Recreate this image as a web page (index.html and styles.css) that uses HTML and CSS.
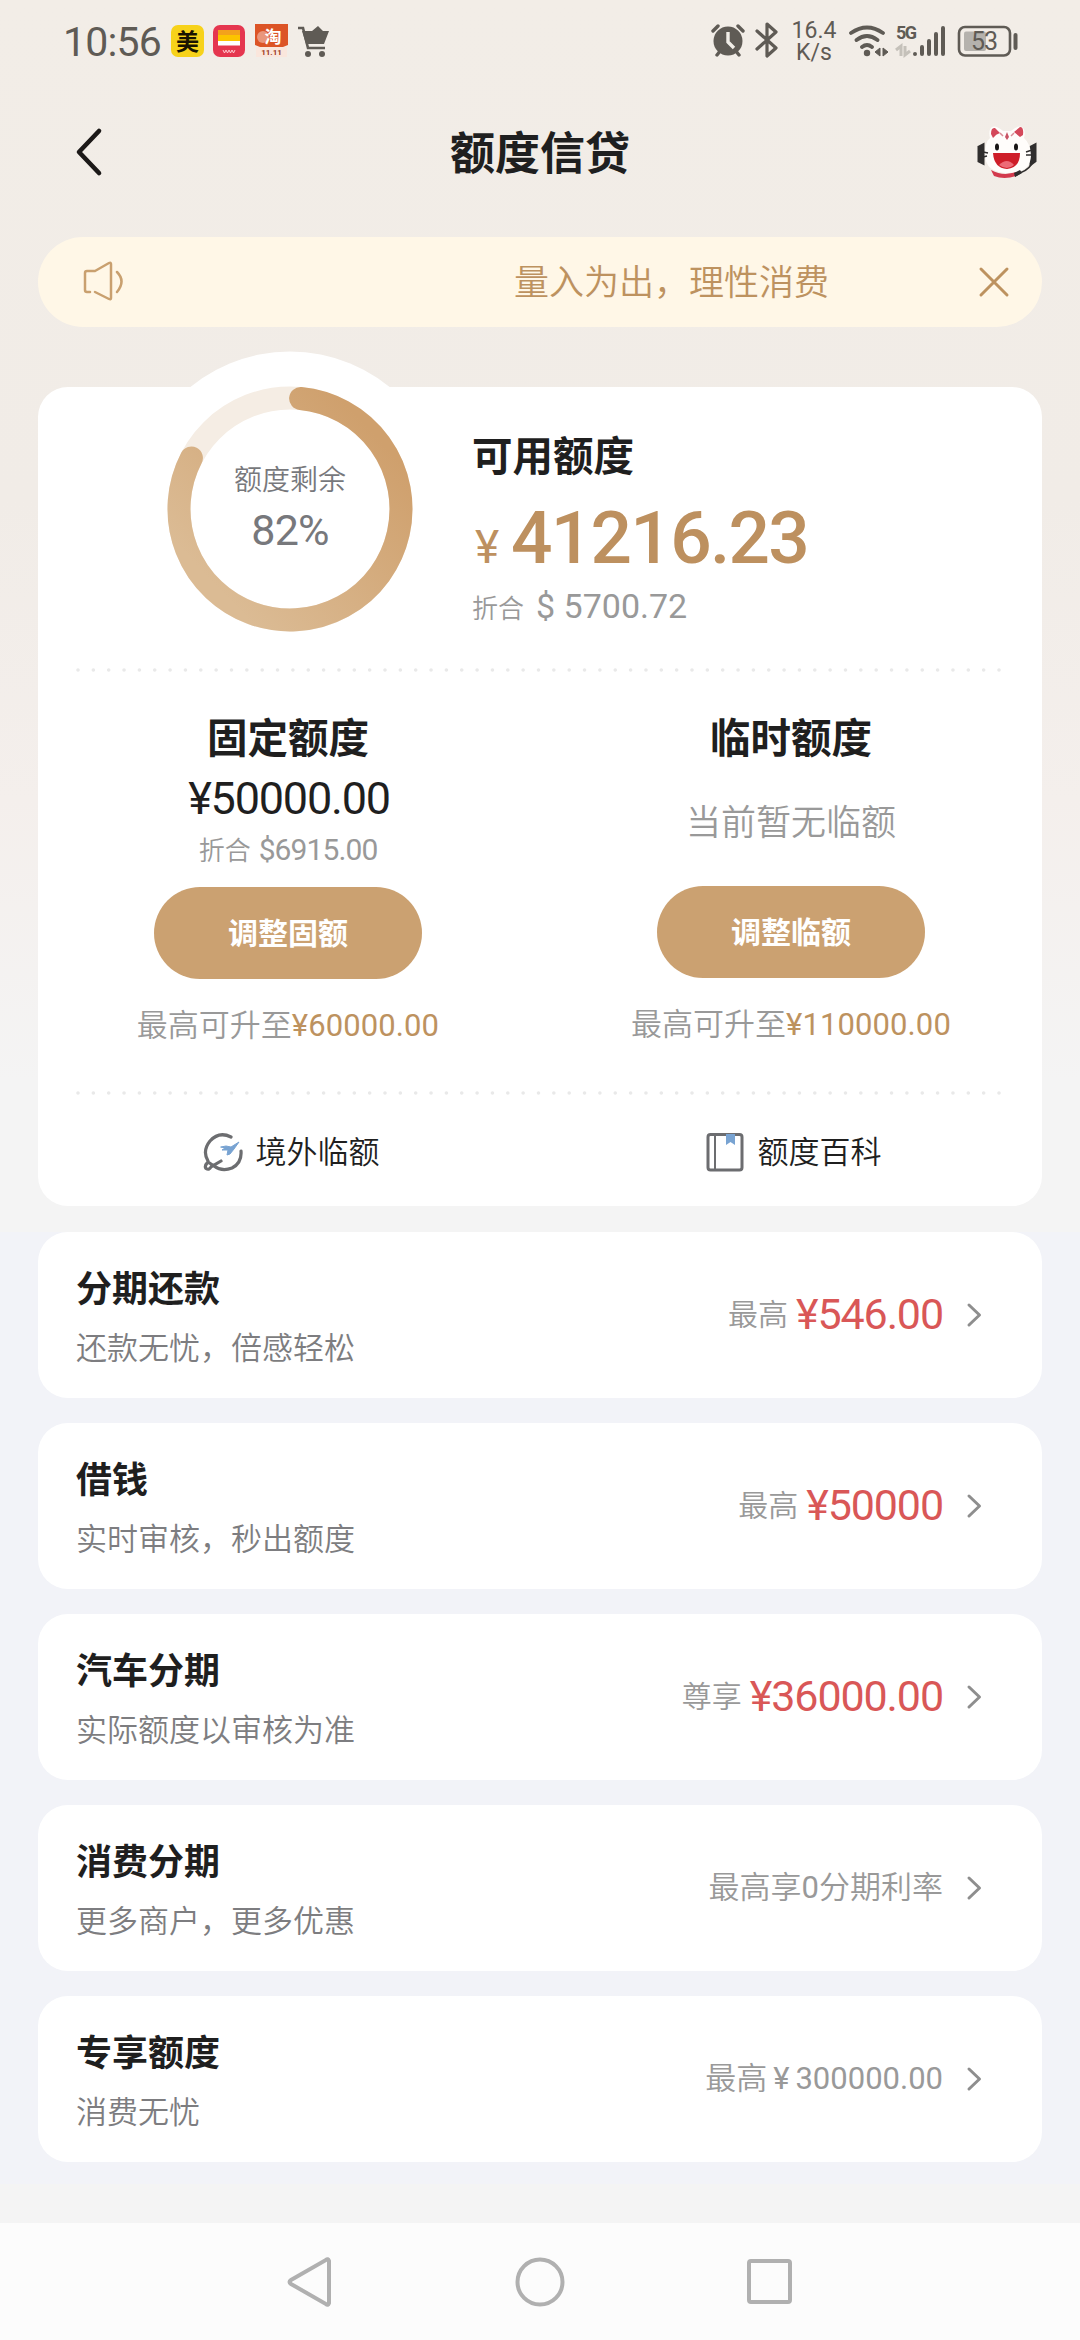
FILE: index.html
```html
<!DOCTYPE html>
<html lang="zh-CN">
<head>
<meta charset="utf-8">
<title>额度信贷</title>
<link rel="stylesheet" href="styles.css">
</head>
<body>
<div class="status">
  <span class="clock">10:56</span>
  <svg class="apps" width="160" height="36" viewBox="0 0 160 36">
    <rect x="1" y="2" width="33" height="32" rx="7" fill="#f7d21a"/>
    <text x="17.500" y="27" class="app-mei">美</text>
    <rect x="43" y="2" width="32" height="32" rx="7" fill="#e5364f"/>
    <rect x="48" y="7" width="22" height="6" fill="#f3a21c"/>
    <rect x="48" y="12" width="22" height="6" fill="#fcc400"/>
    <rect x="48" y="18" width="22" height="4.500" fill="#fff"/>
    <path d="M53 27l1.500 3 1.500-3 1.500 3 1.500-3 1.500 3 1.500-3 1.500 3 1.500-3" fill="none" stroke="#ffc9cf" stroke-width="1"/>
    <path d="M85 1h33v21l-5 2H90l-5-2z" fill="#dc5426"/>
    <path d="M86 24h31v10H86z" fill="#fae6dc"/>
    <circle cx="93" cy="14" r="6" fill="#e9967c"/>
    <text x="103" y="20" class="app-tao">淘</text>
    <text x="101.500" y="32" class="app-date">11.11</text>
    <path d="M128 5h5l5 20h17" fill="none" stroke="#5f5b55" stroke-width="2.600"/>
    <path d="M132 8h10l6-5 5 5h6l-5 13h-18z" fill="#5f5b55"/>
    <circle cx="138" cy="31" r="3" fill="#5f5b55"/><circle cx="152" cy="31" r="3" fill="#5f5b55"/>
  </svg>
  <svg class="sys" width="68" height="36" viewBox="0 0 68 36">
    <circle cx="17" cy="19" r="14.500" fill="#5f5b55"/>
    <path d="M2 9l5-5M32 9l-5-5M6 33l4-5M28 33l-4-5" stroke="#5f5b55" stroke-width="3.400" stroke-linecap="round"/>
    <path d="M17 10v10l6 6" fill="none" stroke="#f1ede7" stroke-width="3.400"/>
    <path d="M46 9l19 17-9 8V2l9 8-19 17" fill="none" stroke="#5f5b55" stroke-width="3.200" stroke-linejoin="round" stroke-linecap="round"/>
  </svg>
  <span class="speed"><span>16.4</span><span>K/s</span></span>
  <svg class="net" width="172" height="36" viewBox="0 0 172 36">
    <g fill="none" stroke="#5f5b55" stroke-width="3.800" stroke-linecap="round">
      <path d="M3 10Q19 -1 35 10M8.500 17Q19 9 29.500 17M14 24Q19 20 24 24"/>
    </g>
    <circle cx="19" cy="30" r="3.200" fill="#5f5b55"/>
    <path d="M27 29l5-4v8zM40 29l-5-4v8z" fill="#5f5b55" stroke="#5f5b55" stroke-width="1"/>
    <text x="48" y="16" class="fiveg">5G</text>
    <path d="M48 27l5-4v10M62 28l-5 4V23" fill="none" stroke="#c5c1ba" stroke-width="3"/>
    <g stroke="#5f5b55" stroke-width="4" stroke-linecap="round">
      <path d="M67 31v0.100M74 24v7M81 18v13M88 11v20M95 5v26"/>
    </g>
    <rect x="111" y="4" width="51" height="28.500" rx="6" fill="none" stroke="#5f5b55" stroke-width="2.600"/>
    <rect x="116" y="8.500" width="22" height="19.500" rx="2" fill="#b5b2ad"/>
    <path d="M167.500 12v13" stroke="#5f5b55" stroke-width="4" stroke-linecap="round"/>
    <text x="136" y="27" class="batt">53</text>
  </svg>
</div>

<header class="header">
  <svg class="back" width="34" height="54" viewBox="0 0 34 54"><path d="M28 6L8 27l20 21" fill="none" stroke="#1c1918" stroke-width="4.600" stroke-linecap="round" stroke-linejoin="round"/></svg>
  <h1>额度信贷</h1>
  <svg class="mascot" width="60" height="56" viewBox="0 0 60 56">
    <path d="M2 23l4-2v18l-4-2zM54 23l4-2v16l-4 3z" fill="#302e2e" stroke="#302e2e" stroke-width="3"/>
    <path d="M14 46q15 8 28 0l-3 6q-12 4-22 0z" fill="#d33a4d"/>
    <path d="M8 30Q8 18 13 14Q11 6 15 3Q19 1 26 7h8Q42 0 46 4Q49 7 47 14Q54 20 54 32Q53 49 31 49Q8 49 8 30z" fill="#fffdfb"/>
    <path d="M14 10q0-7 4-6l5 5q-4 1-7 5zM37 8l6-5q4 0 3 8l-3 2z" fill="#d4485a"/>
    <path d="M30 8l2 5-2 3-2-3z" fill="#c95465"/>
    <path d="M23 9l3 3M37 9l-3 3" stroke="#d98c96" stroke-width="1.500"/>
    <ellipse cx="20" cy="23" rx="2" ry="3.500" fill="#181515"/><ellipse cx="39" cy="23" rx="2" ry="3.500" fill="#181515"/>
    <path d="M16 29h27q0 15-13 16Q17 44 16 29z" fill="#ce1d28"/>
    <path d="M22 41q8-8 15 0-7 6-15 0z" fill="#ed6b76"/>
    <path d="M6 28l5 1M6 33l4-1M49 28l6-2M49 31h6M56 36q-2 9-13 13l-5 3" fill="none" stroke="#302e2e" stroke-width="1.500"/>
    <path d="M37 49l6-3 2 3-7 4z" fill="#302e2e"/>
  </svg>
</header>

<section class="notice">
  <svg width="44" height="42" viewBox="0 0 44 42" fill="none" stroke="#c9a06f" stroke-width="2.500" stroke-linecap="round" stroke-linejoin="round">
    <path d="M7 31H4Q2 31 2 29V12Q2 10 4 10h8L26 2q2-1 2 1v34q0 2-2 1L12 31M34 11q9 9 0 20"/>
  </svg>
  <span class="notice-text">量入为出，理性消费</span>
  <svg width="32" height="32" viewBox="0 0 32 32"><path d="M3 3l26 26M29 3L3 29" stroke="#bd925f" stroke-width="3" stroke-linecap="round"/></svg>
</section>

<section class="card">
  <div class="summary">
    <div class="ring">
      <svg width="316" height="316" viewBox="-158 -158 316 316">
        <defs><linearGradient id="gold" gradientUnits="userSpaceOnUse" x1="70" y1="-90" x2="-90" y2="60"><stop offset="0" stop-color="#cfa06d"/><stop offset="1" stop-color="#dbbb94"/></linearGradient></defs>
        <circle r="157.500" fill="#fff"/>
        <circle r="111" fill="none" stroke="#f5ede4" stroke-width="23"/>
        <path d="M10.600-110.500A111 111 0 1 1-98.600-51" fill="none" stroke="url(#gold)" stroke-width="23" stroke-linecap="round"/>
      </svg>
      <div class="ring-text"><span class="ring-label">额度剩余</span><span class="ring-value">82%</span></div>
    </div>
    <div class="available">
      <h2>可用额度</h2>
      <p class="total"><span class="yen">¥</span><span class="num">41216.23</span></p>
      <p class="usd">折合<span class="num">$ 5700.72</span></p>
    </div>
  </div>
  <svg class="dots" width="927" height="4"><path d="M2 2H927" stroke="#e9e9e9" stroke-width="3.600" stroke-linecap="round" stroke-dasharray="0 15.350"/></svg>
  <div class="limits">
    <div class="limit">
      <h2>固定额度</h2>
      <p class="amount">¥50000.00</p>
      <p class="approx">折合<span class="num">$6915.00</span></p>
      <button class="btn">调整固额</button>
      <p class="max">最高可升至<span class="num">¥60000.00</span></p>
    </div>
    <div class="limit">
      <h2>临时额度</h2>
      <p class="none">当前暂无临额</p>
      <button class="btn">调整临额</button>
      <p class="max">最高可升至<span class="num">¥110000.00</span></p>
    </div>
  </div>
  <svg class="dots" width="927" height="4"><path d="M2 2H927" stroke="#e9e9e9" stroke-width="3.600" stroke-linecap="round" stroke-dasharray="0 15.350"/></svg>
  <div class="links">
    <a class="link">
      <svg width="40" height="40" viewBox="0 0 40 40" fill="none" stroke="#6c6d70" stroke-width="3.200" stroke-linecap="round">
        <path d="M28 5Q16-1 7 9Q-1 19 5 29M38 19Q39 31 29 36Q19 40 11 34M5 30q-4 4-2 6.500 3 2 5-1.500L18 29M5 30l6 4"/>
        <path d="M18 15l5-1 5 1 8-5-5 7-4 5-3 1 1-5-6 0 3-2z" fill="#78a3d2" stroke="#78a3d2" stroke-width="1"/>
      </svg>
      <span>境外临额</span>
    </a>
    <a class="link">
      <svg width="40" height="40" viewBox="0 0 40 40">
        <rect x="3" y="2.500" width="34" height="35.500" rx="2.500" fill="none" stroke="#6c6d70" stroke-width="3"/>
        <path d="M10 2v36" stroke="#6c6d70" stroke-width="2"/>
        <path d="M21 2h9v11l-4.500-3-4.500 3z" fill="#78a3d2"/>
      </svg>
      <span>额度百科</span>
    </a>
  </div>
</section>

<main class="list">
  <article class="item">
    <div class="item-main"><h3>分期还款</h3><p>还款无忧，倍感轻松</p></div>
    <div class="item-side"><span class="tag">最高</span><span class="price">¥546.00</span></div>
    <svg class="chev" width="17" height="26" viewBox="0 0 17 26"><path d="M3 3l10.500 10L3 23"/></svg>
  </article>
  <article class="item">
    <div class="item-main"><h3>借钱</h3><p>实时审核，秒出额度</p></div>
    <div class="item-side"><span class="tag">最高</span><span class="price">¥50000</span></div>
    <svg class="chev" width="17" height="26" viewBox="0 0 17 26"><path d="M3 3l10.500 10L3 23"/></svg>
  </article>
  <article class="item">
    <div class="item-main"><h3>汽车分期</h3><p>实际额度以审核为准</p></div>
    <div class="item-side"><span class="tag">尊享</span><span class="price">¥36000.00</span></div>
    <svg class="chev" width="17" height="26" viewBox="0 0 17 26"><path d="M3 3l10.500 10L3 23"/></svg>
  </article>
  <article class="item">
    <div class="item-main"><h3>消费分期</h3><p>更多商户，更多优惠</p></div>
    <div class="item-side plain"><span>最高享<span class="num">0</span>分期利率</span></div>
    <svg class="chev" width="17" height="26" viewBox="0 0 17 26"><path d="M3 3l10.500 10L3 23"/></svg>
  </article>
  <article class="item">
    <div class="item-main"><h3>专享额度</h3><p>消费无忧</p></div>
    <div class="item-side plain"><span>最高<span class="num gap">¥</span><span class="num gap">300000.00</span></span></div>
    <svg class="chev" width="17" height="26" viewBox="0 0 17 26"><path d="M3 3l10.500 10L3 23"/></svg>
  </article>
</main>
<div class="footer-gap"></div>
<nav class="nav">
  <svg width="52" height="54" viewBox="0 0 52 54"><path d="M44 6v42q-1 3-3 1L6 29q-3-2 0-4L41 5q2-2 3 1z"/></svg>
  <svg width="52" height="54" viewBox="0 0 52 54"><circle cx="26" cy="27" r="22.500"/></svg>
  <svg width="52" height="54" viewBox="0 0 52 54"><rect x="6" y="6" width="41" height="41" rx="2"/></svg>
</nav>
</body>
</html>
```
FILE: styles.css
```css
* { box-sizing: border-box; margin: 0; padding: 0; }
body {
  width: 1080px;
  height: 2340px;
  overflow: hidden;
  display: flex;
  flex-direction: column;
  font-family: "Noto Sans CJK SC", sans-serif;
  font-weight: 350;
  color: #1f1f1f;
  background: linear-gradient(#f2ede7 0, #f1ece7 500px, #f4efec 800px, #f4f4f4 1080px, #f4f4f4 100%);
}
svg { display: block; flex: none; }
.num, .amount, .price, .ring-value, .clock, .speed, .yen { font-family: Roboto, sans-serif; font-weight: 400; }

.status { height: 80px; display: flex; align-items: flex-start; color: #5f5b55; }
.clock { width: 107px; margin-left: 63px; padding-top: 18px; font-size: 41px; line-height: 48px; letter-spacing: -0.8px; white-space: nowrap; }
.apps, .sys, .net { margin-top: 23px; }
.sys { margin-left: 381px; margin-top: 22px; }
.app-mei { font: 700 23px "Noto Sans CJK SC", sans-serif; text-anchor: middle; fill: #191400; }
.app-tao { font: 700 17px "Noto Sans CJK SC", sans-serif; text-anchor: middle; fill: #fff; }
.app-date { font: 700 8px Roboto, sans-serif; text-anchor: middle; fill: #9c3b24; }
.speed { width: 60px; margin-left: 5px; padding-top: 20px; display: flex; flex-direction: column; align-items: center; font-size: 23px; line-height: 22px; }
.net { margin-left: 4px; margin-top: 23px; }
.fiveg { font: 700 18px Roboto, sans-serif; fill: #5f5b55; letter-spacing: -1.5px; }
.batt { font: 400 25px Roboto, sans-serif; fill: #5f5b55; text-anchor: middle; letter-spacing: -1px; }

.header { height: 157px; padding: 0 43px 0 70px; display: grid; grid-template-columns: 60px 1fr 60px; align-items: start; }
.back { margin-top: 45px; margin-left: 1px; }
h1 { margin-top: 37px; margin-right: 27px; text-align: center; font-size: 45px; line-height: 67px; font-weight: 700; }
.mascot { margin-top: 44px; }

.notice { height: 90px; margin: 0 38px; padding: 0 32px 0 45px; border-radius: 45px; background: #fff7e7; display: flex; align-items: center; }
.notice-text { flex: 1; margin-left: 387px; font-size: 35px; line-height: 52px; color: #bd925f; padding-bottom: 4px; }

.card { height: 819px; margin: 60px 38px 0; border-radius: 30px; background: #fff; }
.summary { height: 281px; display: flex; padding-left: 94px; }
.ring { display: grid; margin-top: -36px; height: 316px; }
.ring > * { grid-area: 1 / 1; }
.ring-text { display: flex; flex-direction: column; align-items: center; padding-top: 106px; color: #77787c; }
.ring-label { font-size: 28px; line-height: 42px; }
.ring-value { font-size: 43px; line-height: 52px; margin-top: 5px; letter-spacing: -0.8px; }
.available { margin-left: 24px; padding-top: 37px; }
h2 { font-size: 40.500px; line-height: 60px; font-weight: 700; }
.total { height: 80px; display: flex; align-items: baseline; color: #bd905f; line-height: 80px; margin-top: 14px; }
.yen { font-size: 46px; width: 39px; padding-left: 3px; }
.total .num { font-size: 73px; font-weight: 500; letter-spacing: -1.700px; }
.usd { font-size: 26px; line-height: 40px; color: #999; margin-top: 8px; }
.usd .num { font-size: 34px; margin-left: 12px; letter-spacing: 0; }
.dots { margin-left: 38px; }

.limits { height: 419px; display: flex; }
.limit { width: 502px; display: flex; flex-direction: column; align-items: center; padding-top: 34px; }
.limit:first-child { padding-right: 2px; }
.amount { font-size: 45px; line-height: 52px; letter-spacing: -1.200px; margin-top: 7px; padding-left: 2px; }
.approx { font-size: 26px; line-height: 40px; margin-top: 4px; color: #999; }
.approx .num { font-size: 30px; margin-left: 8px; letter-spacing: -0.900px; }
.btn { width: 268px; height: 92px; margin-top: 17px; border: 0; border-radius: 46px; background: #cba171; color: #fff; font: 700 30px/44px "Noto Sans CJK SC", sans-serif; padding-bottom: 5px; }
.max { font-size: 31px; line-height: 46px; margin-top: 21px; color: #999; white-space: nowrap; }
.max .num { color: #bd925f; letter-spacing: 0.100px; }
.none { font-size: 35px; line-height: 52px; margin-top: 28px; margin-bottom: 23px; color: #999; }
.links { display: flex; padding-top: 37px; }
.link { width: 502px; display: flex; align-items: center; justify-content: center; gap: 13px; font-size: 31px; line-height: 40px; padding-left: 4px; height: 40px; }
.link span { margin-top: -5px; }

.list { margin-top: 26px; height: 952px; padding: 0 38px; background: #f2f3f8; display: flex; flex-direction: column; gap: 25px; }
.item { height: 166px; flex: none; border-radius: 30px; background: #fff; display: flex; align-items: center; padding: 0 59px 0 38px; }
.item-main { flex: 1; padding-bottom: 2px; }
h3 { font-size: 36px; line-height: 54px; font-weight: 700; }
.item-main p { font-size: 31px; line-height: 46px; margin-top: 10px; color: #7d7d80; }
.item-side { display: flex; align-items: center; color: #999; margin-right: 23px; padding-bottom: 3px; }
.tag { font-size: 30px; line-height: 44px; margin-right: 8px; padding-bottom: 4px; }
.price { font-size: 43px; line-height: 52px; color: #d95757; letter-spacing: -1.100px; }
.plain { font-size: 31px; line-height: 46px; padding-bottom: 3px; }
.gap { margin-left: 6px; }
.chev { fill: none; stroke: #8e8e8e; stroke-width: 3; stroke-linecap: round; stroke-linejoin: round; }

.footer-gap { height: 39px; }
.nav { height: 117px; background: #fcfcfc; display: flex; justify-content: center; align-items: center; gap: 177px; }
.nav svg { fill: none; stroke: #b0b0b0; stroke-width: 4; }
```
